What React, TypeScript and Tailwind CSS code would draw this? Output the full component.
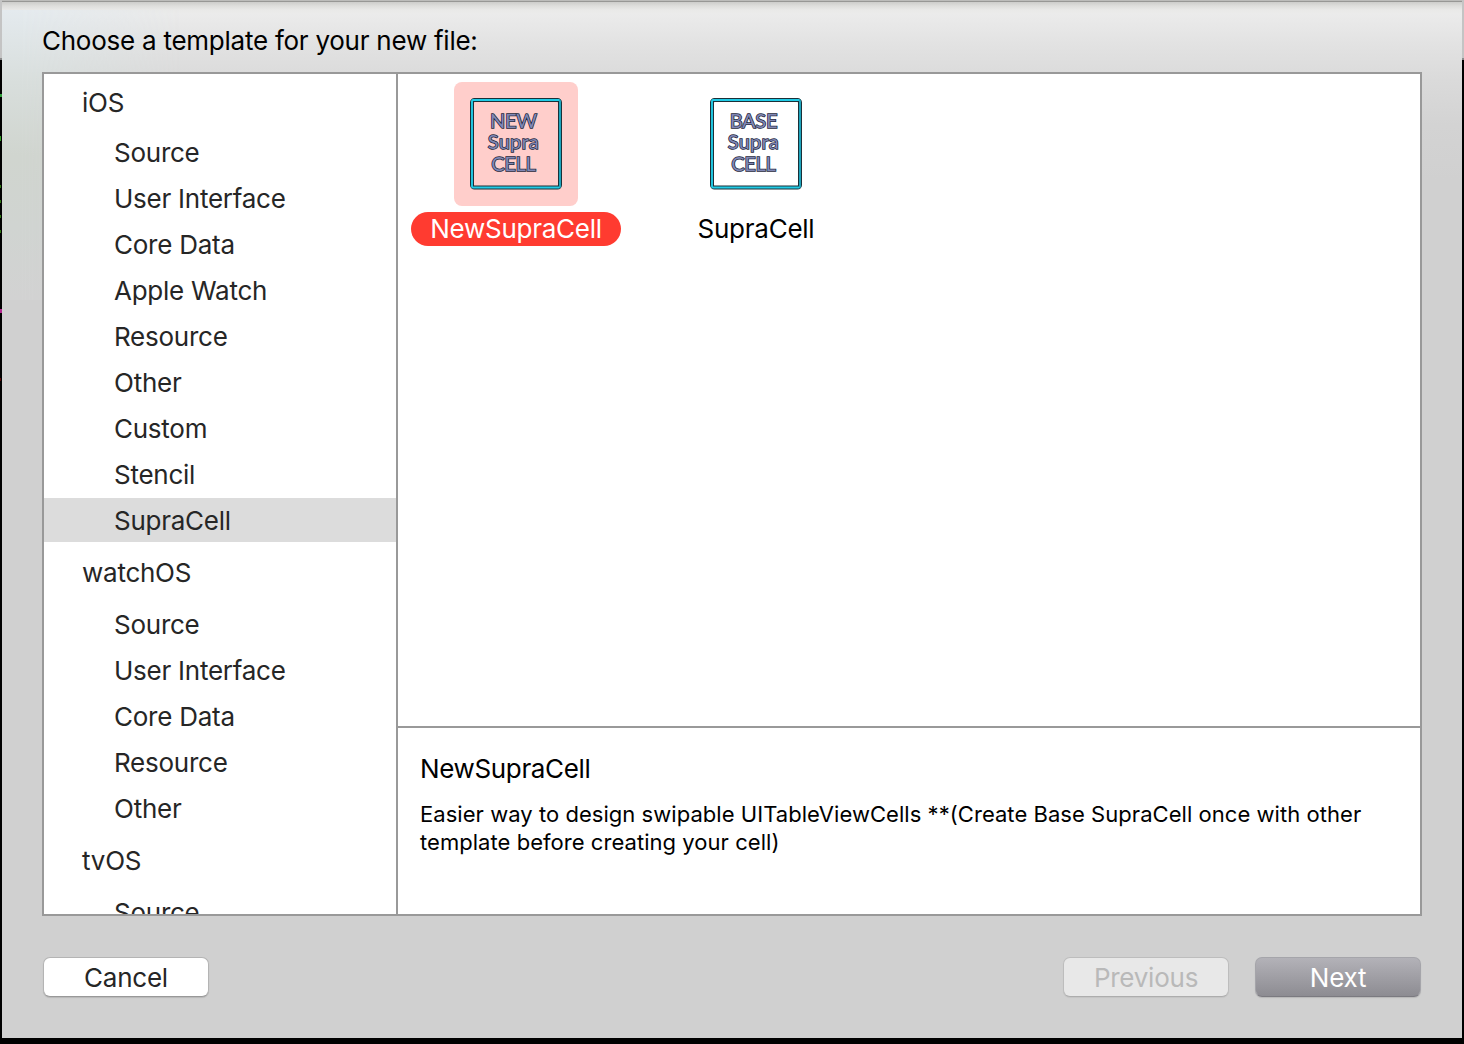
const sections = [
  {
    name: "iOS",
    head: "h-[52px]",
    items: ["Source", "User Interface", "Core Data", "Apple Watch", "Resource", "Other", "Custom", "Stencil", "SupraCell"],
  },
  { name: "watchOS", head: "h-14", items: ["Source", "User Interface", "Core Data", "Resource", "Other"] },
  { name: "tvOS", head: "h-14", items: ["Source"] },
];

const templates = [
  { name: "NewSupraCell", lines: ["NEW", "Supra", "CELL"], selected: true },
  { name: "SupraCell", lines: ["BASE", "Supra", "CELL"], selected: false },
];

function TemplateIcon({ lines }: { lines: string[] }) {
  return (
    <svg width="92" height="92" viewBox="0 0 92 92" className="block">
      <rect x="2" y="2" width="88" height="87.5" rx="2.5" fill="none" stroke="#1b3038" strokeWidth="4" />
      <path d="M89 2H3Q2 2 2 3V88.5Q2 89.5 3 89.5H89" fill="none" stroke="#20cbe6" strokeWidth="1.9" />
      <path d="M89 2Q90 2 90 3V88.5Q90 89.5 89 89.5" fill="none" stroke="#1fabc4" strokeWidth="1.9" />
      <g
        fontFamily="Lato, sans-serif"
        fontSize="20"
        textAnchor="middle"
        fill="#7f87b5"
        stroke="#23263a"
        strokeWidth="1.5"
        paintOrder="stroke"
      >
        {lines.map((line, i) => (
          <text key={line} x="43.4" y={29.7 + i * 21.5} letterSpacing={line === "Supra" ? 0.2 : -0.3}>
            {line}
          </text>
        ))}
      </g>
    </svg>
  );
}

function Sidebar() {
  return (
    <nav className="w-[354px] shrink-0 overflow-hidden border-r-2 border-[#999] bg-white pt-[2px] text-[#262626]">
      {sections.map((section) => (
        <div key={section.name} className="mb-[2px]">
          <div className={`flex items-center pl-[38px] ${section.head}`}>{section.name}</div>
          {section.items.map((item) => (
            <div
              key={item}
              className={`mt-[2px] flex h-11 items-center pl-[70px] ${item === "SupraCell" ? "bg-[#dcdcdc]" : ""}`}
            >
              {item}
            </div>
          ))}
        </div>
      ))}
    </nav>
  );
}

export default function App() {
  return (
    <div className="relative h-[1044px] w-[1464px] overflow-hidden bg-black px-[2px] font-['Inter',sans-serif] text-[26px] tracking-[-0.25px] text-black">
      {/* Slivers of the editor window behind the sheet */}
      <div className="absolute left-0 top-0 h-[60px] w-full border-b-2 border-[#8a8a8a] bg-[#c4c4c4]" />
      <div className="absolute left-0 top-[94px] h-[3px] w-[2px] bg-[#2f9e3a]" />
      <div className="absolute left-0 top-[136px] h-[5px] w-px bg-[#2f9e22]" />
      <div className="absolute left-0 top-[185px] h-[3px] w-px bg-[#2f7a12]" />
      <div className="absolute left-0 top-[200px] h-[3px] w-px bg-[#2f7a12]" />
      <div className="absolute left-0 top-[215px] h-[3px] w-px bg-[#2f7a12]" />
      <div className="absolute left-0 top-[230px] h-[3px] w-px bg-[#2f7a12]" />
      <div className="absolute left-0 top-[309px] h-[4px] w-[2px] bg-[#b32890]" />
      <div className="absolute left-0 top-[378px] h-[3px] w-px bg-[#5a0808]" />

      <div className="relative flex h-[1038px] flex-col bg-[#d0d0d0] bg-[linear-gradient(to_bottom,#bcbcba_0px,#bcbcba_1px,#979795_1px,#979795_2px,#cdcdcb_2px,#dededc_6px,#e9e9e8_10px,#ebebeb_14px,#e2e2e2_45px,#dadada_80px,#d3d3d3_125px,#d0d0d0_180px)] px-10">
        {/* Tint that shows through the translucent left edge */}
        <div className="absolute left-0 top-[10px] h-[290px] w-[180px] bg-[linear-gradient(to_bottom,#e4eaee,#d8dedc_25%,#d0d5cf_50%,#d0d4d1_75%,#d2d2d2)] [mask-image:linear-gradient(to_right,black_10%,transparent)]" />
        <h1 className="relative h-[72px] shrink-0 pt-[25px] leading-8">Choose a template for your new file:</h1>

        <div className="relative flex h-[844px] shrink-0 border-2 border-[#999]">
          <Sidebar />
          <main className="flex flex-1 flex-col bg-white">
            <div className="flex h-[652px] pt-2">
              {templates.map((t) => (
                <div key={t.name} className="flex w-[240px] flex-col items-center pr-1">
                  <div className={`size-[124px] rounded-lg p-4 ${t.selected ? "bg-[#ffcecb]" : ""}`}>
                    <TemplateIcon lines={t.lines} />
                  </div>
                  <div
                    className={`mt-[6px] flex h-[34px] items-center rounded-full px-[19.5px] pb-[2px] ${
                      t.selected ? "bg-[#ff3b30] text-white" : ""
                    }`}
                  >
                    {t.name}
                  </div>
                </div>
              ))}
            </div>
            <section className="flex-1 border-t-2 border-[#999] pl-[22px] pt-[25px]">
              <h2 className="leading-8 tracking-[-0.35px]">NewSupraCell</h2>
              <p className="mt-[15px] w-[960px] text-[22px] leading-7 tracking-[0.045px]">
                Easier way to design swipable UITableViewCells **(Create Base SupraCell once with other template before
                creating your cell)
              </p>
            </section>
          </main>
        </div>

        <footer className="flex pl-px pr-px pt-[41px]">
          <button className="h-10 w-[166px] rounded-[7px] border border-[#b4b4b4] border-b-[#999] bg-white pb-[2px] text-[#262626] shadow-[0_1px_1px_rgba(0,0,0,0.12)]">
            Cancel
          </button>
          <button className="ml-auto h-10 w-[166px] rounded-[7px] border border-[#bdbdbd] border-b-[#adadad] bg-[#e8e8e8] pb-[2px] text-[#b9b9b9] shadow-[0_1px_1px_rgba(0,0,0,0.06)]">
            Previous
          </button>
          <button className="ml-[26px] h-10 w-[166px] rounded-[7px] border border-[#a5a5aa] border-b-[#7b7a80] bg-linear-to-b from-[#b3b2b8] to-[#8d8c92] pb-[2px] text-white shadow-[0_1px_1px_rgba(0,0,0,0.12)]">
            Next
          </button>
        </footer>
      </div>
    </div>
  );
}
